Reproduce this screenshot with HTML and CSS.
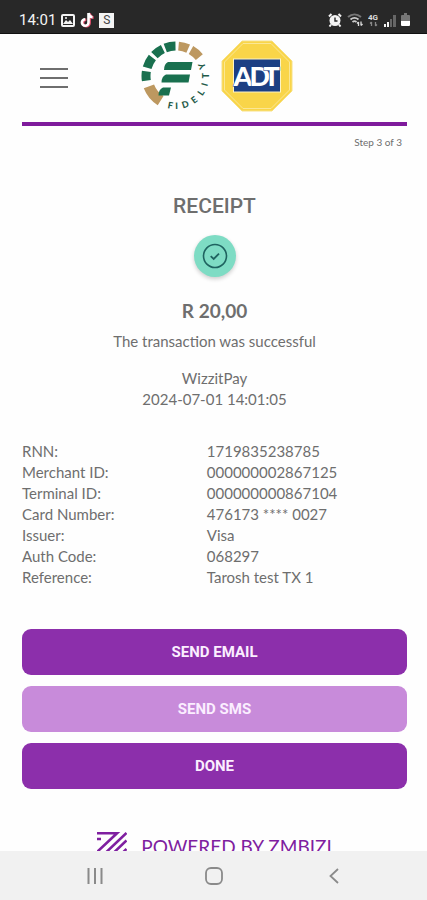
FILE: index.html
```html
<!doctype html>
<html lang="en">
<head>
    <meta charset="UTF-8">
    <meta name="viewport" content="width=device-width, initial-scale=1.0">
    <title>Receipt</title>
    <link rel="stylesheet" href="styles.css">
</head>
<body>
<div class="status-bar">
    <div class="status-left">
        <span class="clock">14:01</span>
        <svg width="14" height="13" viewBox="0 0 14 13">
            <rect x="1" y="1" width="12" height="11" rx="1" fill="none" stroke="#f4f4f4" stroke-width="2"/>
            <path d="M2 10l3-4 2 2 2-2 3 4z" fill="#f4f4f4"/>
            <circle cx="5" cy="4" r="1" fill="#f4f4f4"/>
        </svg>
        <svg width="14" height="16" viewBox="0 0 14 16" fill="none" stroke-width="2.6">
            <path d="M9 1v9.500a3.300 3.300 0 1 1-3.300-3.300M9 1c.3 2.500 1.800 4 4 4.200" stroke="#e8506e" transform="translate(.6 .5)"/>
            <path d="M8.500 1v9.500a3.300 3.300 0 1 1-3.300-3.300M8.500 1c.3 2.500 1.800 4 4 4.200" stroke="#fff"/>
        </svg>
        <span class="app-badge">S</span>
    </div>
    <div class="status-right">
        <svg width="14" height="14" viewBox="0 0 14 14">
            <circle cx="7" cy="7.500" r="5.500" fill="#f4f4f4"/>
            <path d="M1 3.500L3.500 1M13 3.500L10.500 1M3 11.500L1.500 13.500M11 11.500l1.500 2" stroke="#f4f4f4" stroke-width="2"/>
            <path d="M7 4.500v3.500h2.500" fill="none" stroke="#282828" stroke-width="1.400"/>
        </svg>
        <svg width="16" height="14" viewBox="0 0 16 14" fill="none">
            <path d="M1 4c4-3.500 9-3.500 13 0" stroke="#777" stroke-width="2"/>
            <path d="M3.500 6.500c2.500-2 5.500-2 8 0M5.500 9c1.200-1 2.800-1 4 0" stroke="#ccc" stroke-width="1.800"/>
            <path d="M11.500 13V9M10 10.500l1.500-1.500M14 8.500v4M15.500 11L14 12.500" stroke="#ddd" stroke-width="1.300"/>
        </svg>
        <svg width="11" height="14" viewBox="0 0 11 14">
            <text class="net-label" x="0" y="7">4G</text>
            <path d="M3.500 13V9M2 10.500L3.500 9M7.500 9v4M9 11.500L7.500 13" fill="none" stroke="#888" stroke-width="1.300"/>
        </svg>
        <svg width="12" height="13" viewBox="0 0 12 13">
            <path d="M0 10h2v3H0zM3 8h2v5H3z" fill="#f4f4f4"/>
            <path d="M6 5h2v8H6zM9 1h3v12H9z" fill="#666"/>
        </svg>
        <svg width="9" height="14" viewBox="0 0 9 14">
            <path d="M3 0h3v2h2q1 0 1 1v5H0V3q0-1 1-1h2z" fill="#777"/>
            <path d="M0 8h9v4q0 1-1 1H1q-1 0-1-1z" fill="#fff"/>
        </svg>
    </div>
</div>

<main class="screen">
    <header class="header">
        <button class="menu-btn" type="button" aria-label="Menu">
            <span></span>
            <span></span>
            <span></span>
        </button>
        <div class="logos">
            <svg width="72" height="76" viewBox="0 0 72 76" role="img" aria-label="Fidelity">
                <!-- ring segments, pathLength 360 so dashes are in degrees -->
                <circle cx="36" cy="36" r="30" fill="none" stroke="#19704f" stroke-width="9" pathLength="360" stroke-dasharray="0 171 18 7 22 6 20 5 20 91"/>
                <circle cx="36" cy="36" r="30" fill="none" stroke="#bd9860" stroke-width="9" pathLength="360" stroke-dasharray="0 275 19 6 21 39"/>
                <circle cx="36" cy="36" r="29" fill="none" stroke="#bd9860" stroke-width="11" pathLength="360" stroke-dasharray="0 122 37 201"/>
                <g fill="#19704f">
                    <path d="M28 22h24.500l-1.500 8H24q0-6 4-8z"/>
                    <path d="M26 34.500h24l-1.500 8H21.500q0-6 4.500-8z"/>
                    <path d="M23 47.500h8l-2 8H18.500q0-6 4.500-8z"/>
                </g>
                <text class="fidelity-text" x="27.200 35.300 43.100 53.900 62.200 67.200 69 66" y="67.900 69 68.400 63.900 56.200 46.800 38.600 27.700" rotate="11 -1 -18 -37 -56 -73 -90 -111">FIDELITY</text>
            </svg>
            <svg width="72" height="72" viewBox="0 0 72 72" role="img" aria-label="ADT">
                <path d="M21 1h30l20 20v30L51 71H21L1 51V21z" fill="#f9d549" stroke="#f7e084" stroke-width="1"/>
                <path d="M22 3.500h28L68.500 22v28L50 68.500H22L3.500 50V22z" fill="none" stroke="#fbe794" stroke-width="1"/>
                <rect x="12.500" y="19" width="47" height="33" fill="#1c3f83" stroke="#fdf3c4" stroke-width="1"/>
                <text class="adt-text" x="12.500 28.500 42.500" y="46">ADT</text>
            </svg>
        </div>
    </header>

    <p class="step">Step 3 of 3</p>

    <section class="summary">
        <h1>RECEIPT</h1>
        <div class="success-icon">
            <svg width="26" height="26" viewBox="0 0 26 26" fill="none" stroke="#1f6360">
                <circle cx="13" cy="13" r="11.500" stroke-width="1.600"/>
                <path d="M8.700 13.200l3 2.700 5.300-5.300" stroke-width="1.800"/>
            </svg>
        </div>
        <p class="amount">R 20,00</p>
        <p class="message">The transaction was successful</p>
        <p>WizzitPay</p>
        <p>2024-07-01 14:01:05</p>
    </section>

    <table class="details">
        <tr><th scope="row">RNN:</th><td>1719835238785</td></tr>
        <tr><th scope="row">Merchant ID:</th><td>000000002867125</td></tr>
        <tr><th scope="row">Terminal ID:</th><td>000000000867104</td></tr>
        <tr><th scope="row">Card Number:</th><td>476173 **** 0027</td></tr>
        <tr><th scope="row">Issuer:</th><td>Visa</td></tr>
        <tr><th scope="row">Auth Code:</th><td>068297</td></tr>
        <tr><th scope="row">Reference:</th><td>Tarosh test TX 1</td></tr>
    </table>

    <div class="actions">
        <button class="btn" type="button">SEND EMAIL</button>
        <button class="btn btn-light" type="button">SEND SMS</button>
        <button class="btn" type="button">DONE</button>
    </div>

    <footer class="powered">
        <svg width="30" height="30" viewBox="0 0 30 30" fill="none" stroke="#7f1fa0" stroke-width="2.600">
            <path d="M0 1.300h20L0 20M0 7h4M29.500 1L1 28M29.500 8.500L8 29M29.500 17L17 29"/>
        </svg>
        <span>POWERED BY ZMBIZI</span>
    </footer>
</main>

<nav class="nav-bar">
    <button type="button" aria-label="Recent apps">
        <svg width="16" height="16" viewBox="0 0 16 16" stroke="#8a8a8a" stroke-width="2"><path d="M1.500 0v16M8 0v16M14.500 0v16"/></svg>
    </button>
    <button type="button" aria-label="Home">
        <svg width="18" height="18" viewBox="0 0 18 18" fill="none" stroke="#8a8a8a" stroke-width="1.800"><rect x="1" y="1" width="16" height="16" rx="5"/></svg>
    </button>
    <button type="button" aria-label="Back">
        <svg width="10" height="16" viewBox="0 0 10 16" fill="none" stroke="#8a8a8a" stroke-width="1.800"><path d="M9 1L1.500 8 9 15"/></svg>
    </button>
</nav>
</body>
</html>
```
FILE: styles.css
```css
* {
    margin: 0;
    padding: 0;
    box-sizing: border-box;
}
body {
    height: 100vh;
    display: flex;
    flex-direction: column;
    background: #fefefe;
    color: #6e6e6e;
    font-family: Lato, sans-serif;
    font-size: 15px;
    line-height: 21px;
}
button {
    border: none;
    background: none;
    cursor: pointer;
}
svg {
    display: block;
}

/* phone status bar */
.status-bar {
    flex: none;
    display: flex;
    justify-content: space-between;
    padding: 7px 17px 0 19px;
    height: 34px;
    background: #282828;
    border-bottom: 1px solid #111;
}
.status-left,
.status-right {
    display: flex;
    align-items: center;
    gap: 5px;
}
.clock {
    color: #f4f4f4;
    font-family: Roboto, sans-serif;
    font-size: 15px;
}
.app-badge {
    width: 15px;
    height: 15px;
    background: #f4f4f4;
    color: #444;
    font-family: Roboto, sans-serif;
    font-size: 12px;
    line-height: 15px;
    text-align: center;
}
.net-label {
    fill: #ddd;
    font: bold 8px Roboto, sans-serif;
}

/* page */
.screen {
    flex: 1;
    min-height: 0;
    padding: 0 20px 0 22px;
    overflow-y: auto;
    scrollbar-width: none;
}
.header {
    display: grid;
    grid-template-columns: 1fr auto 1fr;
    align-items: center;
    padding: 6px 0 6px 4px;
    border-bottom: 4px solid #7f1b9c;
}
.menu-btn {
    display: flex;
    flex-direction: column;
    gap: 7px;
    width: 28px;
    margin-left: 14px;
}
.menu-btn span {
    height: 2px;
    background: #6e6e6e;
}
.logos {
    display: flex;
    gap: 9px;
}
.fidelity-text {
    fill: #1f5a48;
    font: 900 9px Lato, sans-serif;
}
.adt-text {
    fill: #fff;
    stroke: #1c3f83;
    stroke-width: 1px;
    paint-order: stroke;
    font: 900 27px Lato, sans-serif;
}
.step {
    padding: 6px 5px 0 0;
    font-size: 10px;
    text-align: right;
}
.summary {
    display: flex;
    flex-direction: column;
    align-items: center;
    margin-top: 40px;
}
.summary h1 {
    font-family: Roboto, sans-serif;
    font-size: 21px;
    font-weight: 500;
    line-height: 26px;
}
.success-icon {
    display: flex;
    align-items: center;
    justify-content: center;
    width: 42px;
    height: 42px;
    margin: 16px 0 23px;
    border-radius: 50%;
    background: #7edcc4;
    box-shadow: 0 2px 4px rgba(0, 0, 0, 0.2);
}
.amount {
    font-size: 19px;
    font-weight: bold;
}
.message {
    margin: 10px 0 16px;
}
.details {
    width: 100%;
    margin-top: 31px;
    border-collapse: collapse;
    text-align: left;
}
.details th {
    width: 48%;
    font-weight: normal;
}
.actions {
    display: flex;
    flex-direction: column;
    gap: 11px;
    margin-top: 41px;
}
.btn {
    height: 46px;
    border-radius: 9px;
    background: #8c2fab;
    color: #fbeeff;
    font-family: Roboto, sans-serif;
    font-size: 15px;
    font-weight: bold;
}
.btn-light {
    background: #c88bda;
}
.powered {
    display: flex;
    justify-content: center;
    gap: 14px;
    padding: 43px 0 20px;
    color: #7f1fa0;
    font-size: 19px;
    line-height: 30px;
}

/* phone navigation */
.nav-bar {
    flex: none;
    display: grid;
    grid-template-columns: repeat(3, 1fr);
    height: 49px;
    padding: 0 33px 0 35px;
    background: #f1f1f1;
}
.nav-bar button {
    display: flex;
    align-items: center;
    justify-content: center;
}
```
